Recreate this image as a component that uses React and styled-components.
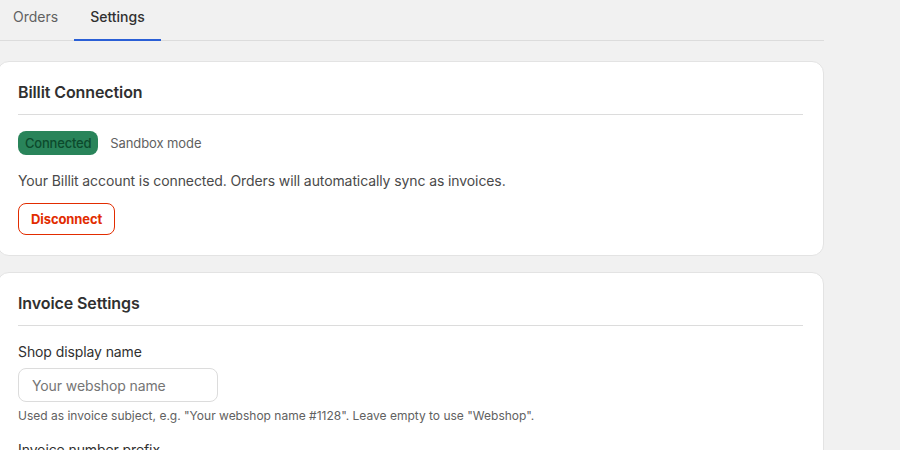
import React, { useState } from "react";
import styled, { createGlobalStyle } from "styled-components";

const GlobalStyle = createGlobalStyle`
  html, body {
    margin: 0;
    padding: 0;
    background: #f1f1f1;
    font-family: Inter, "Noto Sans", "Liberation Sans", sans-serif;
    color: #303030;
    letter-spacing: -0.1px;
    overflow: hidden;
  }
`;

const Page = styled.div`
  width: 827px;
  margin-left: -3px;
`;

const TabList = styled.div`
  display: flex;
  border-bottom: 1px solid #dcdcdc;
`;

const Tab = styled.button`
  background: none;
  border: none;
  border-bottom: 2px solid ${({ active }) => (active ? "#2a5fd6" : "transparent")};
  margin-bottom: -1px;
  padding: 6px 16px 11px;
  font-family: inherit;
  font-size: 14px;
  line-height: 22px;
  letter-spacing: 0;
  color: ${({ active }) => (active ? "#303030" : "#616161")};
  font-weight: ${({ active }) => (active ? 500 : 400)};
  cursor: pointer;
`;

const Stack = styled.div`
  display: flex;
  flex-direction: column;
  gap: 16px;
  margin-top: 20px;
`;

const Card = styled.section`
  background: #fff;
  border: 1px solid #e3e3e3;
  border-radius: 12px;
  padding: 18px 20px 20px;
`;

const CardTitle = styled.h2`
  margin: 0 0 16px;
  font-size: 16px;
  line-height: 24px;
  font-weight: 600;
  color: #303030;
  padding-bottom: 10px;
  border-bottom: 1px solid #dcdcdc;
`;

const StatusRow = styled.div`
  display: flex;
  align-items: center;
  gap: 12px;
  margin-bottom: 16px;
`;

const Badge = styled.span`
  display: inline-flex;
  align-items: center;
  height: 24px;
  padding: 0 7px;
  border-radius: 8px;
  background: #29845a;
  color: #0c4a2c;
  font-size: 13px;
  font-weight: 500;
  letter-spacing: -0.2px;
`;

const Muted = styled.span`
  font-size: 13px;
  color: #616161;
`;

const Text = styled.p`
  margin: 0 0 12px;
  font-size: 14px;
  line-height: 20px;
  color: #4a4a4a;
`;

const DangerButton = styled.button`
  height: 32px;
  padding: 0 12px;
  border: 1px solid #e22c00;
  border-radius: 8px;
  background: #fff;
  color: #e22c00;
  font-family: inherit;
  font-size: 13px;
  font-weight: 650;
  letter-spacing: inherit;
  cursor: pointer;
`;

const Field = styled.div`
  display: flex;
  flex-direction: column;
  margin-bottom: 16px;
`;

const Label = styled.label`
  font-size: 14px;
  line-height: 20px;
  color: #303030;
  margin-bottom: 6px;
`;

const Input = styled.input`
  width: 200px;
  height: 34px;
  box-sizing: border-box;
  padding: 0 13px;
  border: 1px solid #dcdcdc;
  border-radius: 8px;
  font-family: inherit;
  font-size: 14px;
  letter-spacing: inherit;
  color: #303030;
  outline: none;
  &::placeholder {
    color: #757575;
  }
`;

const Help = styled.span`
  margin-top: 6px;
  font-size: 12px;
  line-height: 16px;
  letter-spacing: 0;
  color: #616161;
`;

export default function App() {
  const [tab, setTab] = useState("settings");
  const [shopName, setShopName] = useState("");
  const [prefix, setPrefix] = useState("");

  return (
    <Page>
      <GlobalStyle />
      <TabList>
        <Tab active={tab === "orders"} onClick={() => setTab("orders")}>Orders</Tab>
        <Tab active={tab === "settings"} onClick={() => setTab("settings")}>Settings</Tab>
      </TabList>

      <Stack>
        <Card>
          <CardTitle>Billit Connection</CardTitle>
          <StatusRow>
            <Badge>Connected</Badge>
            <Muted>Sandbox mode</Muted>
          </StatusRow>
          <Text>Your Billit account is connected. Orders will automatically sync as invoices.</Text>
          <DangerButton>Disconnect</DangerButton>
        </Card>

        <Card>
          <CardTitle>Invoice Settings</CardTitle>
          <Field>
            <Label htmlFor="shop">Shop display name</Label>
            <Input
              id="shop"
              value={shopName}
              onChange={(e) => setShopName(e.target.value)}
              placeholder="Your webshop name"
            />
            <Help>Used as invoice subject, e.g. "Your webshop name #1128". Leave empty to use "Webshop".</Help>
          </Field>
          <Field>
            <Label htmlFor="prefix">Invoice number prefix</Label>
            <Input id="prefix" value={prefix} onChange={(e) => setPrefix(e.target.value)} placeholder="INV-" />
          </Field>
        </Card>
      </Stack>
    </Page>
  );
}
